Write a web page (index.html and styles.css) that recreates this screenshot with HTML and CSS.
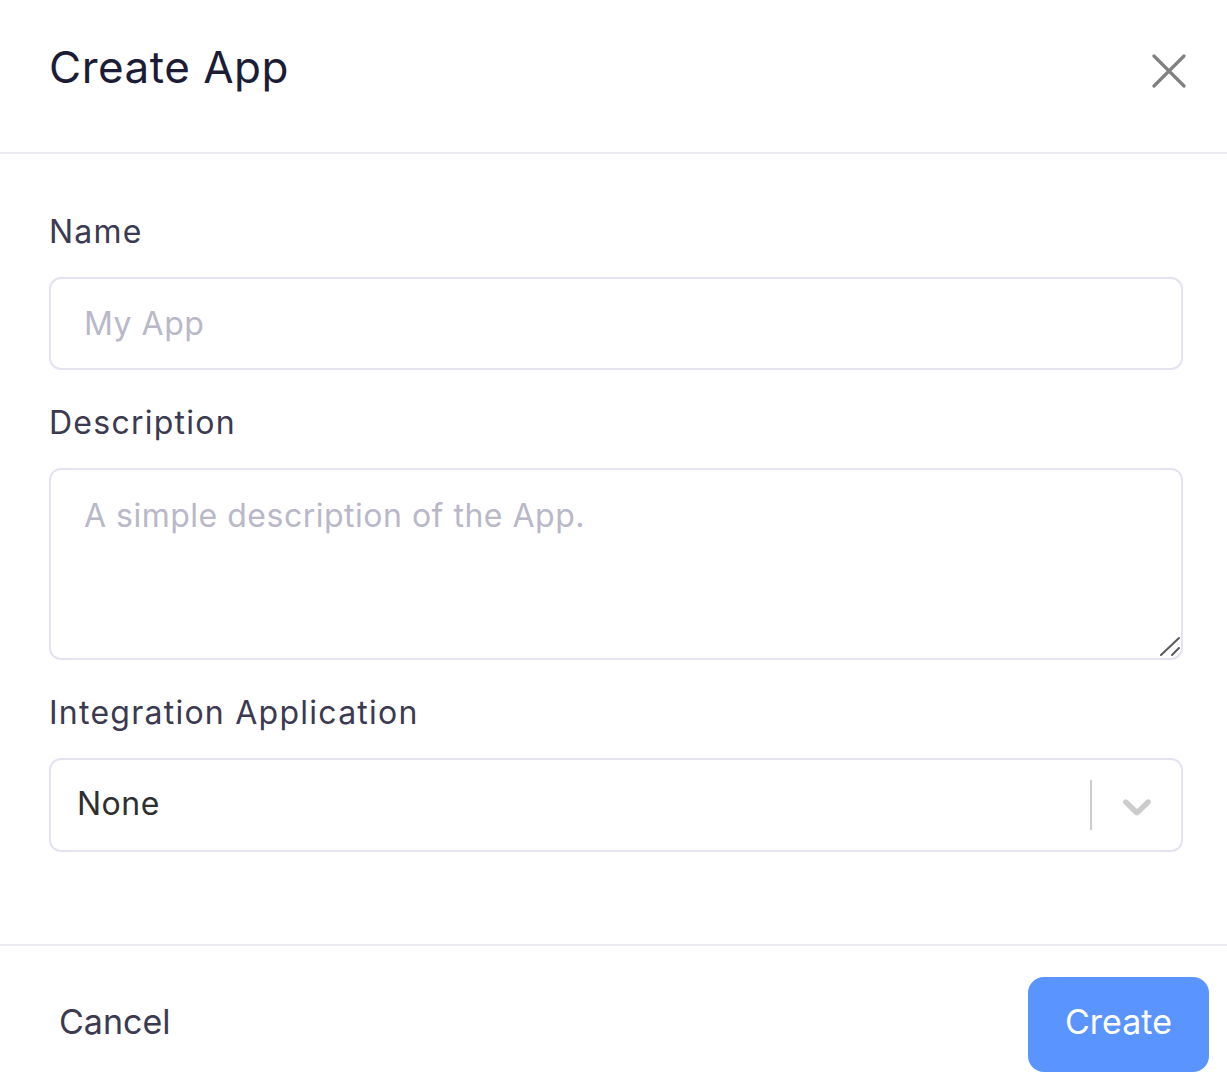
FILE: index.html
```html
<!DOCTYPE html>
<html lang="en">
<head>
<meta charset="utf-8">
<title>Create App</title>
<link rel="stylesheet" href="styles.css">
</head>
<body>
<div class="modal">
  <header class="modal-header">
    <h1 class="modal-title">Create App</h1>
    <button class="close-btn" type="button" aria-label="Close">
      <svg width="34" height="34" viewBox="0 0 34 34"><path d="M2 2 L32 32 M32 2 L2 32" stroke="#808080" stroke-width="3.2" stroke-linecap="round" fill="none"/></svg>
    </button>
  </header>
  <main class="modal-body">
    <div class="field">
      <label class="field-label" for="name">Name</label>
      <input class="text-input" id="name" type="text" placeholder="My App">
    </div>
    <div class="field">
      <label class="field-label" for="desc">Description</label>
      <div class="area-wrap">
        <textarea class="text-area" id="desc" placeholder="A simple description of the App."></textarea>
        <svg class="grip" width="24" height="24" viewBox="0 0 24 24"><path d="M4 21 L22 4 M15 21 L22 14" stroke="#5a5a5a" stroke-width="2" stroke-linecap="round" fill="none"/></svg>
      </div>
    </div>
    <div class="field">
      <label class="field-label">Integration Application</label>
      <div class="select">
        <div class="select-value">None</div>
        <span class="select-sep"></span>
        <span class="select-indicator">
          <svg width="48" height="48" viewBox="0 0 20 20"><path fill="#cccccc" d="M4.516 7.548c0.436-0.446 1.043-0.481 1.576 0l3.908 3.747 3.908-3.747c0.533-0.481 1.141-0.446 1.574 0 0.436 0.445 0.408 1.197 0 1.615-0.406 0.418-4.695 4.502-4.695 4.502-0.217 0.223-0.502 0.335-0.787 0.335s-0.57-0.112-0.789-0.335c0 0-4.287-4.084-4.695-4.502s-0.436-1.17 0-1.615z"/></svg>
        </span>
      </div>
    </div>
  </main>
  <footer class="modal-footer">
    <button class="btn-cancel" type="button">Cancel</button>
    <button class="btn-create" type="button">Create</button>
  </footer>
</div>
</body>
</html>
```

FILE: styles.css
```css
* { box-sizing: border-box; }
html, body { margin: 0; padding: 0; background: #ffffff; }
body { font-family: Inter, Lato, "Noto Sans", sans-serif; }

.modal { width: 1227px; min-height: 1092px; background: #fff; }

.modal-header {
  height: 154px;
  border-bottom: 2px solid #ebebf1;
  display: flex;
  justify-content: space-between;
  align-items: flex-start;
  padding: 39px 41px 0 49px;
}
.modal-title {
  margin: 0;
  font-size: 44px;
  line-height: 56px;
  font-weight: 400;
  letter-spacing: 0.5px;
  color: #1c1c36;
}
.close-btn {
  margin-top: 15px;
  border: 0;
  background: none;
  padding: 0;
  width: 34px;
  height: 34px;
  cursor: pointer;
}
.close-btn svg { display: block; }

.modal-body {
  padding: 58px 44px 92px 49px;
  display: flex;
  flex-direction: column;
  gap: 33px;
}
.field { display: flex; flex-direction: column; gap: 25px; }
.field-label {
  font-size: 32px;
  line-height: 40px;
  letter-spacing: 1.25px;
  color: #3b3a50;
}
.text-input, .text-area, .select {
  width: 100%;
  border: 2px solid #e4e3ef;
  border-radius: 12px;
  font-family: inherit;
  font-size: 32px;
  letter-spacing: 0.5px;
  color: #333;
  background: #fff;
  outline: none;
}
.text-input {
  height: 93px;
  padding: 0 33px;
}
.area-wrap { position: relative; }
.text-area {
  height: 192px;
  padding: 22px 33px;
  line-height: 48px;
  resize: none;
  display: block;
}
.grip { position: absolute; right: 2px; bottom: 2px; display: block; pointer-events: none; }
.text-input::placeholder, .text-area::placeholder { color: #b9b8c9; opacity: 1; }

.select {
  height: 94px;
  display: flex;
  align-items: center;
  padding: 0 20px 0 26px;
}
.select-value { flex: 1; color: #2f2f2f; margin-top: -4px; }
.select-sep {
  width: 2px;
  height: 50px;
  background: #cccccc;
  margin-right: 21px;
}
.select-indicator { display: flex; align-items: center; margin-top: 2px; }
.select-indicator svg { display: block; }

.modal-footer {
  border-top: 2px solid #ebebf1;
  display: flex;
  justify-content: space-between;
  align-items: center;
  padding: 31px 18px 20px 59px;
}
.btn-cancel {
  border: 0;
  background: none;
  padding: 0;
  font-family: inherit;
  font-size: 34px;
  color: #3b3a50;
  margin-top: -7px;
  cursor: pointer;
}
.btn-create {
  width: 181px;
  height: 95px;
  border: 0;
  border-radius: 16px;
  background: #5a94ff;
  color: #fff;
  font-family: inherit;
  font-size: 34px;
  padding: 0 0 6px;
  cursor: pointer;
}
```
